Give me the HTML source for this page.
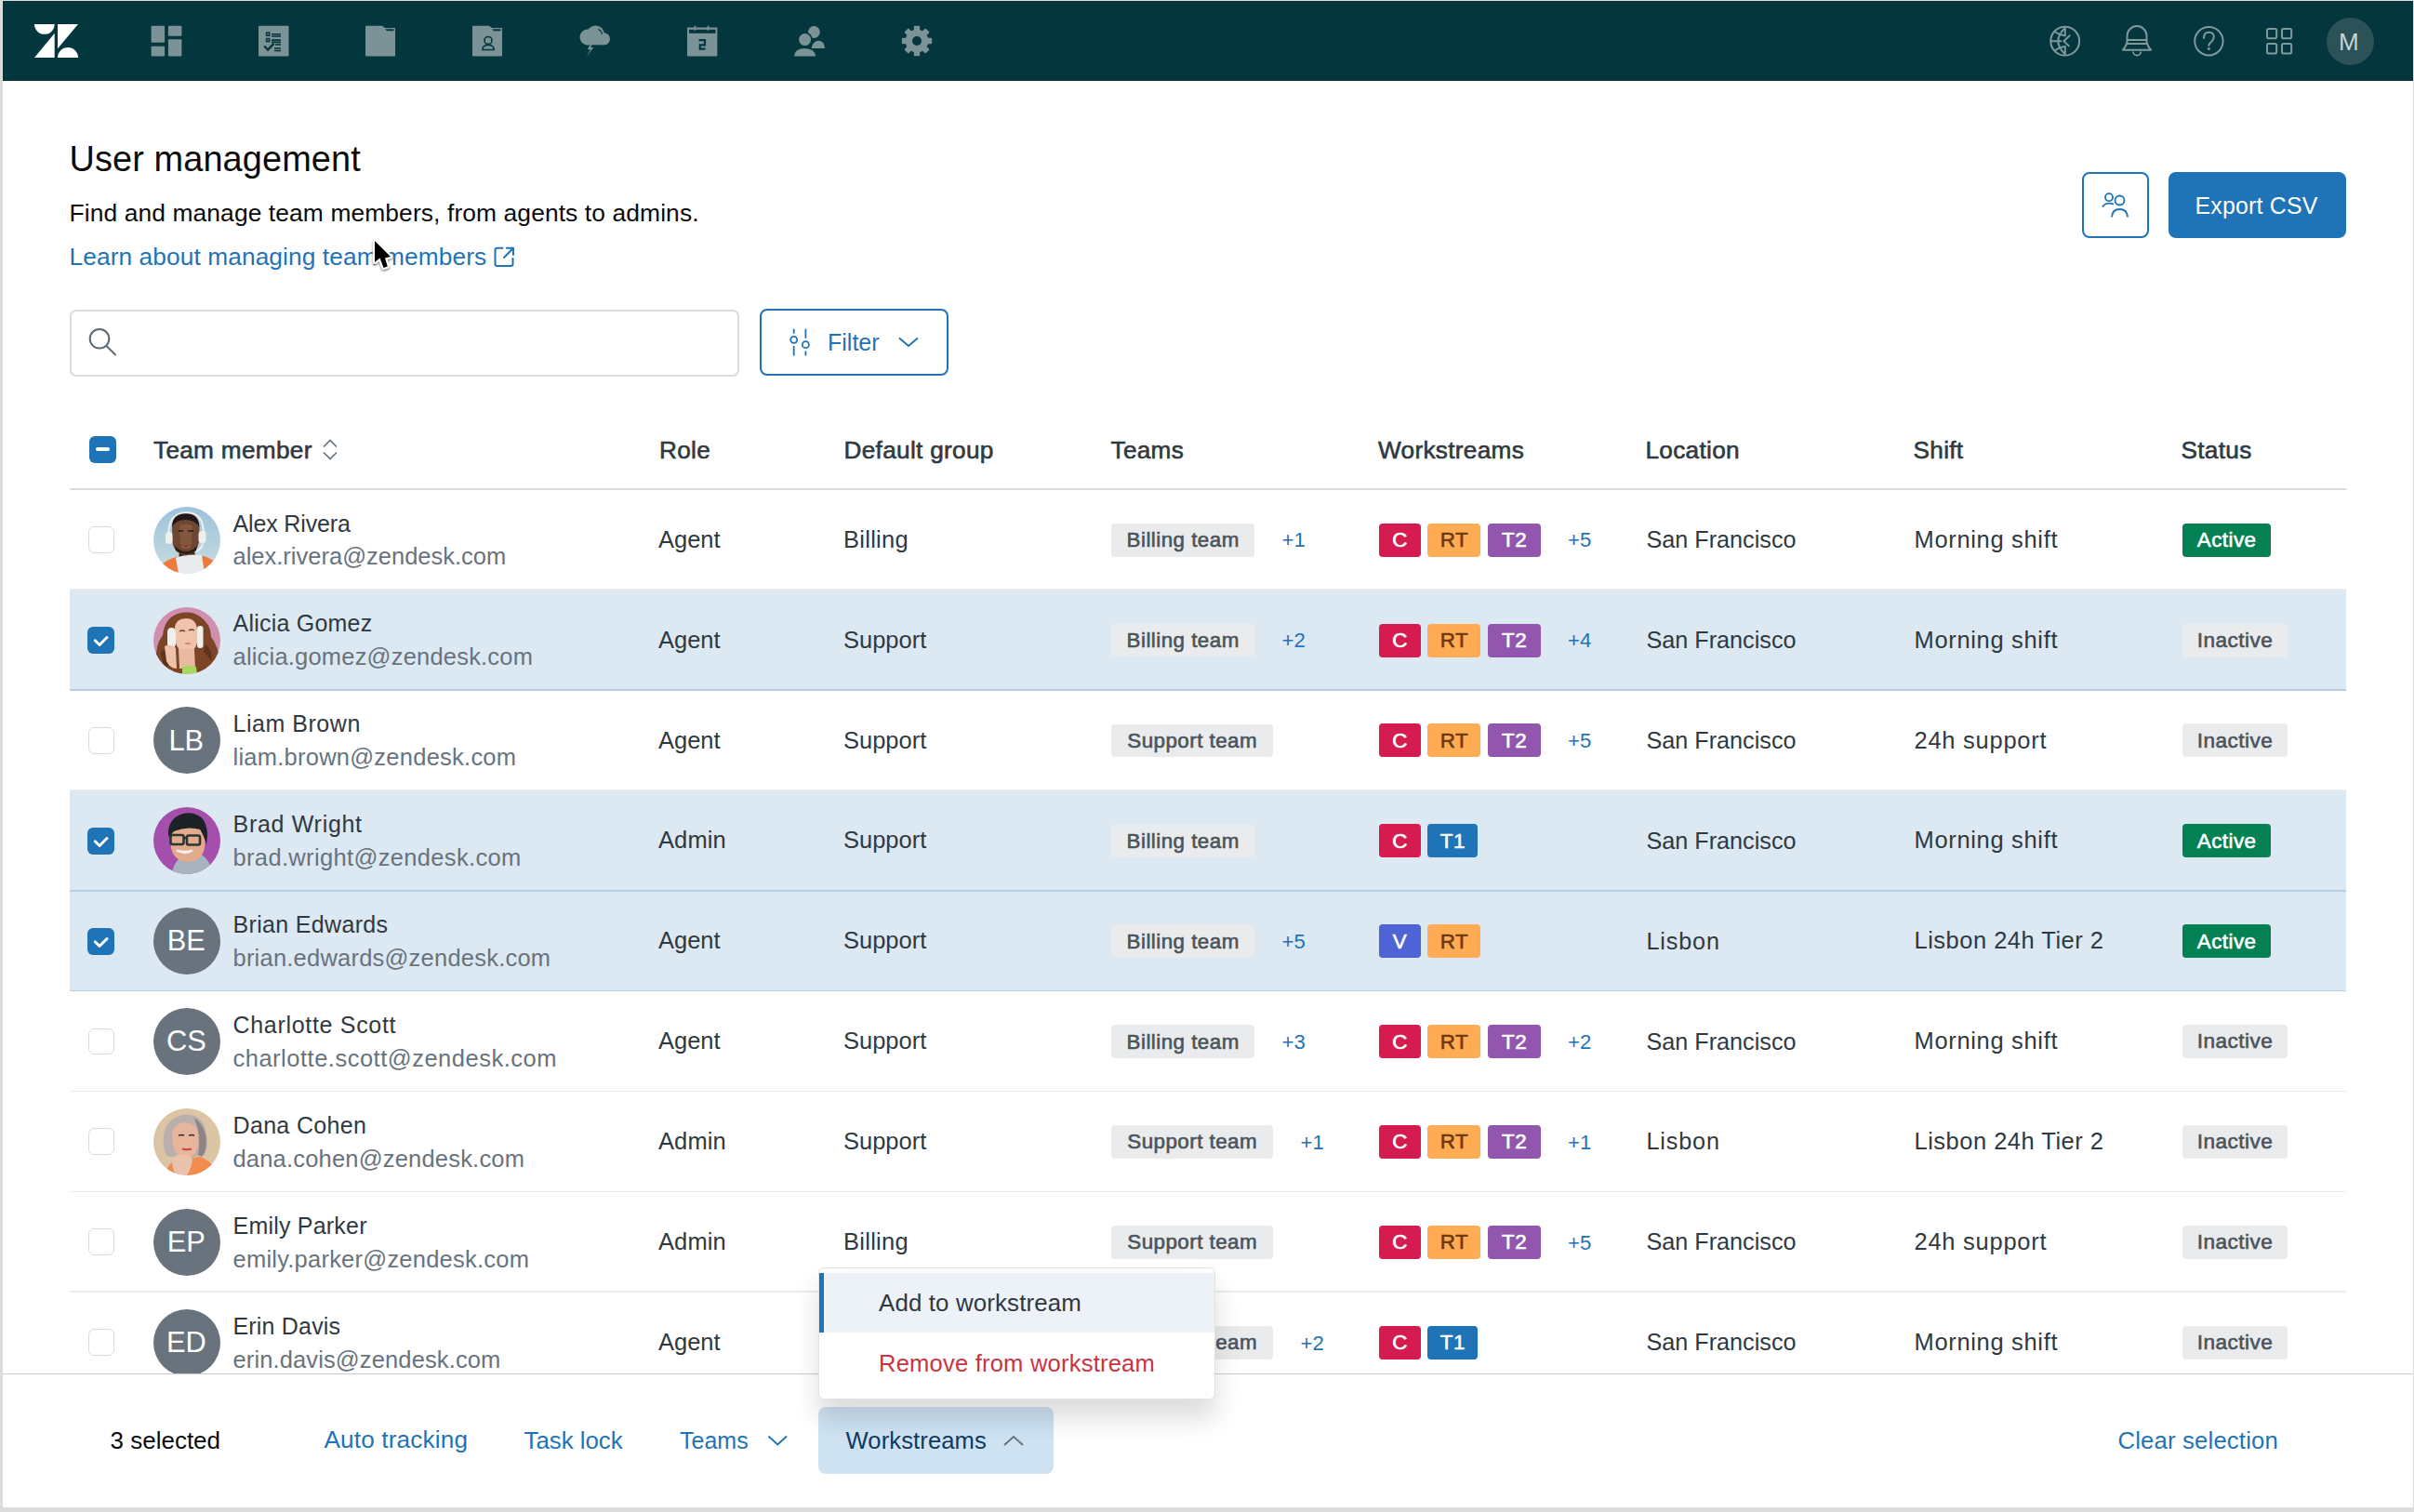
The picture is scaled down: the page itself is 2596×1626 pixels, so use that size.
<!DOCTYPE html><html><head><meta charset="utf-8"><style>
html,body{margin:0;padding:0;}
body{width:2596px;height:1626px;position:relative;overflow:hidden;background:#fff;font-family:"Liberation Sans",sans-serif;}
.t{position:absolute;white-space:nowrap;}
.b{position:absolute;display:block;}
</style></head><body>
<div class="b" style="left:0.00px;top:0.00px;width:2596.00px;height:87.00px;background:#03363d;"></div>
<svg class="b" style="left:36.00px;top:25.00px;" width="50" height="38" viewBox="0 0 50 38"><g fill="#fff">
<path d="M1 1 H22.7 A10.85 10.85 0 0 1 1 1 Z"/>
<path d="M1 37 H22.7 V10.8 Z"/>
<path d="M26 1 H48 L26 27.3 Z"/>
<path d="M26 37 A11 11 0 0 1 48 37 Z"/>
</g></svg>
<svg class="b" style="left:162.00px;top:27.00px;" width="34" height="34" viewBox="0 0 34 34"><g fill="#7b9396">
<rect x="0.6" y="0.7" width="14.5" height="18" rx="1"/>
<rect x="18.9" y="0.7" width="14.5" height="11" rx="1"/>
<rect x="0.6" y="22.7" width="14.5" height="10.8" rx="1"/>
<rect x="18.9" y="15.2" width="14.5" height="18.3" rx="1"/>
</g></svg>
<svg class="b" style="left:277.00px;top:27.00px;" width="34" height="34" viewBox="0 0 34 34"><rect x="1" y="0.7" width="32.5" height="32.8" rx="1.2" fill="#7b9396"/>
<g fill="none" stroke="#03363d" stroke-width="1.6">
<rect x="9.6" y="8.2" width="3" height="3"/><rect x="9.6" y="14.6" width="3" height="3"/>
<path d="M15 9.7 H25 M15 12 H25 M15 16.1 H25 M15 18.4 H25 M19 21 H25 M18 25 H25 M18 27.5 H25"/>
</g>
<path d="M7.2 22.5 L11 26.5 L17.5 19.8" fill="none" stroke="#03363d" stroke-width="2.4"/></svg>
<svg class="b" style="left:392.00px;top:27.00px;" width="34" height="34" viewBox="0 0 34 34"><path d="M1 1.7 Q1 0.7 2 0.7 H19 L22 3 H33 V33 Q33 33.5 32 33.5 H2 Q1 33.5 1 32.5 Z" fill="#7b9396"/>
<path d="M22 4.3 H31.5 V6.2 H24 Z" fill="#03363d"/></svg>
<svg class="b" style="left:507.00px;top:27.00px;" width="34" height="34" viewBox="0 0 34 34"><path d="M1 1.7 Q1 0.7 2 0.7 H19 L22 3 H33 V33 Q33 33.5 32 33.5 H2 Q1 33.5 1 32.5 Z" fill="#7b9396"/>
<path d="M22 4.3 H31.5 V6.2 H24 Z" fill="#03363d"/>
<circle cx="18" cy="16.5" r="4" fill="none" stroke="#03363d" stroke-width="1.6"/>
<path d="M11.8 26.5 Q11.8 21.5 18 21.5 Q24.2 21.5 24.2 26.5 Z" fill="none" stroke="#03363d" stroke-width="1.6"/></svg>
<svg class="b" style="left:622.00px;top:27.00px;" width="36" height="36" viewBox="0 0 36 36"><g fill="#7b9396">
<circle cx="10" cy="13" r="8.5"/><circle cx="18.5" cy="10" r="9.5"/><circle cx="27.5" cy="14.8" r="6.5"/>
<rect x="8" y="12" width="20" height="9.3"/>
<path d="M14.2 18 L9.8 26.2 L13 26.2 L8.8 34 L16.2 24 L13 24 L16 18 Z"/>
</g>
<path d="M21 4.5 Q25 5.5 25.3 10" fill="none" stroke="#03363d" stroke-width="1.2"/></svg>
<svg class="b" style="left:738.00px;top:27.00px;" width="35" height="35" viewBox="0 0 35 35"><path d="M1 2.5 H33.4 V32.5 Q33.4 33.5 32.4 33.5 H2 Q1 33.5 1 32.5 Z" fill="#7b9396"/>
<rect x="3" y="4.8" width="28.5" height="4" fill="#03363d"/>
<rect x="8.5" y="0.7" width="1.8" height="5" fill="#7b9396"/><rect x="22.7" y="0.7" width="1.8" height="5" fill="#7b9396"/>
<path d="M13.5 16.2 H20 V21.3 H14.8 V25.6 H20.5" fill="none" stroke="#03363d" stroke-width="2.2"/></svg>
<svg class="b" style="left:853.00px;top:27.00px;" width="36" height="36" viewBox="0 0 36 36"><g fill="#7b9396">
<circle cx="22.4" cy="7.5" r="6.4"/>
<path d="M19.5 24.9 Q21 17 27.5 16.8 Q33.5 17.2 34.2 24.9 Z"/>
<circle cx="12.6" cy="15.6" r="7.3" stroke="#03363d" stroke-width="1.6"/>
<path d="M1 33.6 Q1.5 25 12.3 24.9 Q23.5 25.2 24.2 33.6 Z"/>
</g></svg>
<svg class="b" style="left:969.00px;top:27.00px;" width="34" height="34" viewBox="0 0 34 34"><g transform="translate(17,17)" fill="#7b9396"><rect x="-3.2" y="-16.2" width="6.4" height="7" rx="1" transform="rotate(0)"/><rect x="-3.2" y="-16.2" width="6.4" height="7" rx="1" transform="rotate(45)"/><rect x="-3.2" y="-16.2" width="6.4" height="7" rx="1" transform="rotate(90)"/><rect x="-3.2" y="-16.2" width="6.4" height="7" rx="1" transform="rotate(135)"/><rect x="-3.2" y="-16.2" width="6.4" height="7" rx="1" transform="rotate(180)"/><rect x="-3.2" y="-16.2" width="6.4" height="7" rx="1" transform="rotate(225)"/><rect x="-3.2" y="-16.2" width="6.4" height="7" rx="1" transform="rotate(270)"/><rect x="-3.2" y="-16.2" width="6.4" height="7" rx="1" transform="rotate(315)"/><circle r="12.3"/><circle r="5" fill="#03363d"/></g></svg>
<svg class="b" style="left:2203.00px;top:27.00px;" width="36" height="36" viewBox="0 0 36 36"><g fill="none" stroke="#80999c" stroke-width="2" stroke-linecap="round">
<circle cx="17.7" cy="17.2" r="15.4"/>
<path d="M17.8 3.5 V11.3 M17.8 23 V30.8"/>
<path d="M17.3 3.5 Q3.3 17.2 17.3 30.8"/>
<path d="M3.5 17.2 H13.3"/>
<path d="M7.2 7.5 Q11.5 10.6 17.3 11.3 M7.2 27 Q11.5 23.8 17.3 23.1"/>
<path d="M22.7 11.3 L16.4 17.2 L21.8 22.4"/>
</g></svg>
<svg class="b" style="left:2281.00px;top:26.00px;" width="36" height="40" viewBox="0 0 36 40"><g fill="none" stroke="#80999c" stroke-width="2" stroke-linejoin="round">
<path d="M6.5 19 V12.6 A10.5 10.5 0 0 1 27.5 12.6 V19 Q28.5 24 32 27.8 H2 Q5.5 24 6.5 19 Z"/>
<path d="M6.5 16.9 H27.5 M6.5 20.9 H27.5"/>
<path d="M13 29.5 A4.1 4.1 0 0 0 21.2 29.5" stroke-width="1.8"/>
</g></svg>
<svg class="b" style="left:2358.00px;top:27.00px;" width="36" height="36" viewBox="0 0 36 36"><g fill="none" stroke="#80999c" stroke-width="2" stroke-linecap="round">
<circle cx="17.4" cy="17.2" r="15.2"/>
<path d="M12 14 Q12 7.8 17.4 7.8 Q22.8 7.8 22.8 12.8 Q22.8 15.6 19.8 18.2 Q17.3 20.3 17.3 22"/>
</g><circle cx="17.3" cy="25.4" r="1.5" fill="#80999c"/></svg>
<svg class="b" style="left:2436.00px;top:29.00px;" width="33" height="33" viewBox="0 0 33 33"><g fill="none" stroke="#80999c" stroke-width="2">
<rect x="2" y="2" width="10.2" height="10.2" rx="1.8"/><rect x="18" y="2" width="10.2" height="10.2" rx="1.8"/>
<rect x="2" y="18.1" width="10.2" height="10.4" rx="1.8"/><rect x="18" y="18.1" width="10.2" height="10.4" rx="1.8"/>
</g></svg>
<div class="b" style="left:2501.50px;top:19.00px;width:51.00px;height:51.00px;background:#2b5256;border-radius:50%;"></div>
<div class="t" style="left:2515.00px;top:29.24px;font-size:26px;line-height:32.5px;color:#c9d3d4;font-weight:400;">M</div>
<div class="t" style="left:74.50px;top:148.18px;font-size:37.9px;line-height:47.38px;color:#0b0b0b;font-weight:400;letter-spacing:0.110px;">User management</div>
<div class="t" style="left:74.50px;top:212.95px;font-size:26.4px;line-height:33.0px;color:#0b0b0b;font-weight:400;letter-spacing:0.102px;">Find and manage team members, from agents to admins.</div>
<div class="t" style="left:74.50px;top:260.25px;font-size:26.3px;line-height:32.88px;color:#1f73b7;font-weight:400;letter-spacing:0.088px;">Learn about managing team members</div>
<svg class="b" style="left:531.00px;top:265.00px;" width="24" height="23" viewBox="0 0 24 23"><g fill="none" stroke="#1f73b7" stroke-width="2" stroke-linecap="round" stroke-linejoin="round">
<path d="M9.5 1.8 H3.8 Q1.5 1.8 1.5 4 V19 Q1.5 21 3.8 21 H18.5 Q20.5 21 20.5 19 V13"/>
<path d="M13.8 1.8 H21 V9 M21 1.8 L11 12"/>
</g></svg>
<div class="b" style="left:2239.00px;top:184.50px;width:71.50px;height:71.50px;box-sizing:border-box;border:2px solid #1f73b7;border-radius:8px;"></div>
<svg class="b" style="left:2260.00px;top:206.00px;" width="32" height="30" viewBox="0 0 32 30"><g fill="none" stroke="#1f73b7" stroke-width="1.8">
<circle cx="8" cy="6.2" r="4"/><circle cx="19.5" cy="9.5" r="5"/>
<path d="M1 16.5 Q3.5 12.6 8.5 12.6 Q11 12.6 12.8 13.8"/>
<path d="M11 27.5 Q11.5 19 19.5 19 Q27.5 19 28 27.5"/>
</g></svg>
<div class="b" style="left:2332.00px;top:184.50px;width:191.00px;height:71.50px;background:#1f73b7;border-radius:8px;"></div>
<div class="t" style="left:2360.50px;top:205.91px;font-size:24.9px;line-height:31.12px;color:#fff;font-weight:400;letter-spacing:0.208px;">Export CSV</div>
<div class="b" style="left:75.00px;top:333.00px;width:719.50px;height:71.50px;box-sizing:border-box;border:2px solid #d8dcde;border-radius:7px;"></div>
<svg class="b" style="left:94.00px;top:351.00px;" width="34" height="34" viewBox="0 0 34 34"><g fill="none" stroke="#5c6970" stroke-width="2">
<circle cx="13" cy="13.3" r="10.3"/><path d="M20.5 21 L30 30.5" stroke-linecap="round"/></g></svg>
<div class="b" style="left:817.00px;top:332.00px;width:203.00px;height:72.00px;box-sizing:border-box;border:2px solid #1f73b7;border-radius:8px;"></div>
<svg class="b" style="left:846.00px;top:350.00px;" width="28" height="36" viewBox="0 0 28 36"><g fill="none" stroke="#1f73b7" stroke-width="1.8">
<path d="M7.7 3.8 V8.8 M7.7 22 V32.6 M20.4 3.8 V13.8 M20.4 27.4 V32.6"/>
<circle cx="7.7" cy="15.3" r="3.5"/><circle cx="20.4" cy="20.7" r="3.5"/></g></svg>
<div class="t" style="left:890.00px;top:352.91px;font-size:25px;line-height:31.25px;color:#1f73b7;font-weight:400;">Filter</div>
<svg class="b" style="left:965.00px;top:361.00px;" width="24" height="14" viewBox="0 0 24 14"><path d="M2 2.5 L12 11 L22 2.5" fill="none" stroke="#1f73b7" stroke-width="1.9"/></svg>
<svg class="b" style="left:393.00px;top:248.00px;" width="36" height="48" viewBox="0 0 36 48"><defs><filter id="cs" x="-30%" y="-30%" width="160%" height="160%"><feGaussianBlur stdDeviation="1.3"/></filter></defs>
<path d="M10 11 L10 34 L15.5 29.5 L19.5 40 L23.8 38.5 L21 29.5 L27 28 Z" fill="rgba(0,0,0,0.45)" stroke="rgba(0,0,0,0.45)" stroke-width="4.5" stroke-linejoin="round" filter="url(#cs)" transform="translate(0,1.5)"/>
<path d="M10 11 L10 34 L15.5 29.5 L19.5 40 L23.8 38.5 L21 29.5 L27 28 Z" fill="#fff" stroke="#fff" stroke-width="4.4" stroke-linejoin="round"/>
<path d="M10 11 L10 34 L15.5 29.5 L19.5 40 L23.8 38.5 L21 29.5 L27 28 Z" fill="#000"/>
</svg>
<div class="b" style="left:96.20px;top:469.00px;width:28.60px;height:28.90px;background:#1f73b7;border-radius:6px;"></div>
<div class="b" style="left:103.00px;top:481.30px;width:15.00px;height:4.20px;background:#fff;border-radius:3px;"></div>
<div class="t" style="left:165.00px;top:467.75px;font-size:26.2px;line-height:32.75px;color:#2f3941;font-weight:400;-webkit-text-stroke:0.6px currentColor;letter-spacing:0.3px;">Team member</div>
<svg class="b" style="left:345.00px;top:471.00px;" width="20" height="25" viewBox="0 0 20 25"><g fill="none" stroke="#68737d" stroke-width="1.7"><path d="M3 9.5 L10 2.5 L17 9.5"/><path d="M3 15.5 L10 22.5 L17 15.5"/></g></svg>
<div class="t" style="left:709.00px;top:467.75px;font-size:26.2px;line-height:32.75px;color:#2f3941;font-weight:400;-webkit-text-stroke:0.6px currentColor;letter-spacing:0.3px;">Role</div>
<div class="t" style="left:907.50px;top:467.75px;font-size:26.2px;line-height:32.75px;color:#2f3941;font-weight:400;-webkit-text-stroke:0.6px currentColor;letter-spacing:0.3px;">Default group</div>
<div class="t" style="left:1194.50px;top:467.75px;font-size:26.2px;line-height:32.75px;color:#2f3941;font-weight:400;-webkit-text-stroke:0.6px currentColor;letter-spacing:0.3px;">Teams</div>
<div class="t" style="left:1482.00px;top:467.75px;font-size:26.2px;line-height:32.75px;color:#2f3941;font-weight:400;-webkit-text-stroke:0.6px currentColor;letter-spacing:0.3px;">Workstreams</div>
<div class="t" style="left:1769.50px;top:467.75px;font-size:26.2px;line-height:32.75px;color:#2f3941;font-weight:400;-webkit-text-stroke:0.6px currentColor;letter-spacing:0.3px;">Location</div>
<div class="t" style="left:2057.50px;top:467.75px;font-size:26.2px;line-height:32.75px;color:#2f3941;font-weight:400;-webkit-text-stroke:0.6px currentColor;letter-spacing:0.3px;">Shift</div>
<div class="t" style="left:2345.50px;top:467.75px;font-size:26.2px;line-height:32.75px;color:#2f3941;font-weight:400;-webkit-text-stroke:0.6px currentColor;letter-spacing:0.3px;">Status</div>
<div class="b" style="left:74.50px;top:525.00px;width:2448.50px;height:2.00px;background:#d8dcde;"></div>
<div class="b" style="left:74.50px;top:633.10px;width:2448.50px;height:1.80px;background:#e9ebed;"></div>
<div class="b" style="left:94.60px;top:566.00px;width:28.60px;height:28.80px;box-sizing:border-box;border:1.6px solid #d8dcde;border-radius:6px;background:#fff;"></div>
<svg class="b" style="left:165.00px;top:544.60px;" width="72" height="72" viewBox="0 0 72 72"><clipPath id="c0"><circle cx="36" cy="36" r="36"/></clipPath><g clip-path="url(#c0)"><filter id="blp1" x="-10%" y="-10%" width="120%" height="120%"><feGaussianBlur stdDeviation="0.7"/></filter><defs><linearGradient id="g1" x1="0" y1="0" x2="0" y2="1"><stop offset="0" stop-color="#9cc3da"/><stop offset="1" stop-color="#c9dce3"/></linearGradient></defs>
<rect width="72" height="72" fill="url(#g1)"/>
<g filter="url(#blp1)">
<path d="M4 72 L10 61 Q18 55 26 54 L30 72 Z" fill="#ee7a3c"/>
<path d="M50 52 Q60 54 67 60 L62 72 L50 72 Z" fill="#ee7a3c"/>
<path d="M28 48 L44 48 L46 56 L27 56 Z" fill="#3b2619"/>
<path d="M24 55 Q35 50 52 52 L55 72 L27 72 Z" fill="#e8ecec"/>
<path d="M20 24 Q20 8 34.5 8 Q49 8 49.5 24 L49 38 Q47 50 35 52.5 Q22 50 20.5 38 Z" fill="#6e4631"/>
<path d="M28 20 Q34 17 42 20 L41 40 Q35 43 29 40 Z" fill="#84563c"/>
<path d="M20 22 Q20 7 34.5 7 Q49 7 49.5 22 Q45 14 34.5 14 Q24 14 20 22 Z" fill="#231914"/>
<path d="M23 42 Q35 54 47 42 L46 47 Q35 55 24 47 Z" fill="#2e1f17"/>
<path d="M27 26 H32 M37 26 H43" stroke="#2a1a12" stroke-width="1.6"/>
<path d="M30 42.5 Q35 45 40 42.5" stroke="#9a5a48" stroke-width="2"/>
<path d="M16.5 32 Q15 7 35 6 Q55 6 54 32" fill="none" stroke="#ecebea" stroke-width="2.2"/>
<rect x="13" y="27" width="7.5" height="13" rx="3.5" fill="#efefee"/>
<rect x="48.5" y="26" width="8" height="13" rx="3.5" fill="#efefee"/>
<path d="M53 38 Q53 45 46 48" fill="none" stroke="#efefee" stroke-width="1.8"/>
</g></g></svg>
<div class="t" style="left:250.50px;top:547.51px;font-size:25px;line-height:31.25px;color:#2f3941;font-weight:400;letter-spacing:-0.142px;">Alex Rivera</div>
<div class="t" style="left:250.50px;top:583.42px;font-size:25.5px;line-height:31.88px;color:#68737d;font-weight:400;">alex.rivera@zendesk.com</div>
<div class="t" style="left:708.00px;top:564.72px;font-size:25.5px;line-height:31.88px;color:#2f3941;font-weight:400;">Agent</div>
<div class="t" style="left:907.00px;top:564.72px;font-size:25.5px;line-height:31.88px;color:#2f3941;font-weight:400;letter-spacing:0.275px;">Billing</div>
<div class="b" style="left:1195.00px;top:562.80px;width:154.00px;height:35.80px;background:#e9ebed;border-radius:4px;"></div>
<div class="t" style="left:1272.20px;top:567.04px;font-size:22.4px;line-height:28.0px;color:#49545c;font-weight:400;transform:translateX(-50%);-webkit-text-stroke:0.6px currentColor;letter-spacing:0.45px;">Billing team</div>
<div class="t" style="left:1378.50px;top:567.33px;font-size:22.2px;line-height:27.75px;color:#1f73b7;font-weight:400;">+1</div>
<div class="b" style="left:1482.80px;top:562.60px;width:45.00px;height:36.00px;background:#d51b50;border-radius:4px;"></div>
<div class="t" style="left:1505.50px;top:567.04px;font-size:22.4px;line-height:28.0px;color:#fff;font-weight:400;transform:translateX(-50%);-webkit-text-stroke:0.6px currentColor;letter-spacing:0.45px;">C</div>
<div class="b" style="left:1535.10px;top:562.60px;width:57.20px;height:36.00px;background:#ffac55;border-radius:4px;"></div>
<div class="t" style="left:1563.90px;top:567.04px;font-size:22.4px;line-height:28.0px;color:#6b3a11;font-weight:400;transform:translateX(-50%);-webkit-text-stroke:0.6px currentColor;letter-spacing:0.45px;">RT</div>
<div class="b" style="left:1599.60px;top:562.60px;width:57.50px;height:36.00px;background:#9356ae;border-radius:4px;"></div>
<div class="t" style="left:1628.55px;top:567.04px;font-size:22.4px;line-height:28.0px;color:#fff;font-weight:400;transform:translateX(-50%);-webkit-text-stroke:0.6px currentColor;letter-spacing:0.45px;">T2</div>
<div class="t" style="left:1686.00px;top:567.33px;font-size:22.2px;line-height:27.75px;color:#1f73b7;font-weight:400;">+5</div>
<div class="t" style="left:1770.50px;top:565.02px;font-size:25.2px;line-height:31.5px;color:#2f3941;font-weight:400;">San Francisco</div>
<div class="t" style="left:2058.50px;top:564.72px;font-size:25.5px;line-height:31.88px;color:#2f3941;font-weight:400;letter-spacing:0.667px;">Morning shift</div>
<div class="b" style="left:2346.90px;top:562.60px;width:95.00px;height:36.00px;background:#038153;border-radius:4px;"></div>
<div class="t" style="left:2394.60px;top:567.04px;font-size:22.4px;line-height:28.0px;color:#fff;font-weight:400;transform:translateX(-50%);-webkit-text-stroke:0.6px currentColor;letter-spacing:0.45px;">Active</div>
<div class="b" style="left:74.50px;top:634.90px;width:2448.50px;height:107.90px;background:#dce8f2;"></div>
<div class="b" style="left:74.50px;top:741.00px;width:2448.50px;height:1.80px;background:#b5d0e6;"></div>
<div class="b" style="left:94.30px;top:673.90px;width:28.90px;height:29.00px;background:#1f73b7;border-radius:6px;"></div>
<svg class="b" style="left:94.30px;top:673.90px;" width="29" height="29" viewBox="0 0 29 29"><path d="M8.3 14.8 L13 19.5 L21 11.5" fill="none" stroke="#fff" stroke-width="3" stroke-linecap="round" stroke-linejoin="round"/></svg>
<svg class="b" style="left:165.00px;top:652.50px;" width="72" height="72" viewBox="0 0 72 72"><clipPath id="c1"><circle cx="36" cy="36" r="36"/></clipPath><g clip-path="url(#c1)"><filter id="blp2" x="-10%" y="-10%" width="120%" height="120%"><feGaussianBlur stdDeviation="0.7"/></filter><rect width="72" height="72" fill="#d08fae"/>
<g filter="url(#blp2)">
<path d="M3 58 Q2 40 10 30 Q12 12 26 7 Q40 3 50 10 Q62 18 62 32 Q70 42 71 58 L66 72 L8 72 Z" fill="#7b4526"/>
<path d="M8 50 Q12 40 16 52 Q20 62 12 66 Z M56 40 Q64 46 62 58 Q58 50 54 48 Z" fill="#5e311b"/>
<path d="M23 22 Q24 12 35 12 Q46 12 47 24 L47 38 Q45 48 36 49 Q26 48 24 38 Z" fill="#efc3ac"/>
<path d="M27 45 L44 45 L45 66 L28 66 Z" fill="#eab9a2"/>
<path d="M31 64 Q38 62 46 64 L47 72 L31 72 Z" fill="#a8d85e"/>
<path d="M28 26 Q31 24 34 26 M38 25 Q41 23 44 25" stroke="#6a4030" stroke-width="1.3" fill="none"/>
<path d="M33 39 Q37 37 41 39 Q37 41.5 33 39 Z" fill="#d8847a"/>
<rect x="15" y="22" width="9" height="22" rx="4.5" fill="#f2eeec"/>
<rect x="47" y="20" width="6.5" height="24" rx="3" fill="#f2eeec"/>
<path d="M12 42 Q18 38 24 44 L25 66 Q18 66 14 58 Z" fill="#eec2aa"/>
</g></g></svg>
<div class="t" style="left:250.50px;top:655.41px;font-size:25px;line-height:31.25px;color:#2f3941;font-weight:400;letter-spacing:0.221px;">Alicia Gomez</div>
<div class="t" style="left:250.50px;top:691.32px;font-size:25.5px;line-height:31.88px;color:#68737d;font-weight:400;letter-spacing:0.199px;">alicia.gomez@zendesk.com</div>
<div class="t" style="left:708.00px;top:672.62px;font-size:25.5px;line-height:31.88px;color:#2f3941;font-weight:400;">Agent</div>
<div class="t" style="left:907.00px;top:672.62px;font-size:25.5px;line-height:31.88px;color:#2f3941;font-weight:400;">Support</div>
<div class="b" style="left:1195.00px;top:670.70px;width:154.00px;height:35.80px;background:#e9ebed;border-radius:4px;"></div>
<div class="t" style="left:1272.20px;top:674.94px;font-size:22.4px;line-height:28.0px;color:#49545c;font-weight:400;transform:translateX(-50%);-webkit-text-stroke:0.6px currentColor;letter-spacing:0.45px;">Billing team</div>
<div class="t" style="left:1378.50px;top:675.23px;font-size:22.2px;line-height:27.75px;color:#1f73b7;font-weight:400;">+2</div>
<div class="b" style="left:1482.80px;top:670.50px;width:45.00px;height:36.00px;background:#d51b50;border-radius:4px;"></div>
<div class="t" style="left:1505.50px;top:674.94px;font-size:22.4px;line-height:28.0px;color:#fff;font-weight:400;transform:translateX(-50%);-webkit-text-stroke:0.6px currentColor;letter-spacing:0.45px;">C</div>
<div class="b" style="left:1535.10px;top:670.50px;width:57.20px;height:36.00px;background:#ffac55;border-radius:4px;"></div>
<div class="t" style="left:1563.90px;top:674.94px;font-size:22.4px;line-height:28.0px;color:#6b3a11;font-weight:400;transform:translateX(-50%);-webkit-text-stroke:0.6px currentColor;letter-spacing:0.45px;">RT</div>
<div class="b" style="left:1599.60px;top:670.50px;width:57.50px;height:36.00px;background:#9356ae;border-radius:4px;"></div>
<div class="t" style="left:1628.55px;top:674.94px;font-size:22.4px;line-height:28.0px;color:#fff;font-weight:400;transform:translateX(-50%);-webkit-text-stroke:0.6px currentColor;letter-spacing:0.45px;">T2</div>
<div class="t" style="left:1686.00px;top:675.23px;font-size:22.2px;line-height:27.75px;color:#1f73b7;font-weight:400;">+4</div>
<div class="t" style="left:1770.50px;top:672.92px;font-size:25.2px;line-height:31.5px;color:#2f3941;font-weight:400;">San Francisco</div>
<div class="t" style="left:2058.50px;top:672.62px;font-size:25.5px;line-height:31.88px;color:#2f3941;font-weight:400;letter-spacing:0.667px;">Morning shift</div>
<div class="b" style="left:2346.90px;top:670.50px;width:113.00px;height:36.00px;background:#e9ebed;border-radius:4px;"></div>
<div class="t" style="left:2403.60px;top:674.74px;font-size:22.6px;line-height:28.25px;color:#49545c;font-weight:400;transform:translateX(-50%);-webkit-text-stroke:0.6px currentColor;letter-spacing:0.45px;">Inactive</div>
<div class="b" style="left:74.50px;top:848.90px;width:2448.50px;height:1.80px;background:#e9ebed;"></div>
<div class="b" style="left:94.60px;top:781.80px;width:28.60px;height:28.80px;box-sizing:border-box;border:1.6px solid #d8dcde;border-radius:6px;background:#fff;"></div>
<div class="b" style="left:164.50px;top:760.10px;width:72.00px;height:72.00px;background:#68737d;border-radius:50%;"></div>
<div class="t" style="left:200.30px;top:777.68px;font-size:30.8px;line-height:38.5px;color:#fff;font-weight:400;transform:translateX(-50%);">LB</div>
<div class="t" style="left:250.50px;top:763.31px;font-size:25px;line-height:31.25px;color:#2f3941;font-weight:400;letter-spacing:0.534px;">Liam Brown</div>
<div class="t" style="left:250.50px;top:799.22px;font-size:25.5px;line-height:31.88px;color:#68737d;font-weight:400;letter-spacing:0.244px;">liam.brown@zendesk.com</div>
<div class="t" style="left:708.00px;top:780.52px;font-size:25.5px;line-height:31.88px;color:#2f3941;font-weight:400;">Agent</div>
<div class="t" style="left:907.00px;top:780.52px;font-size:25.5px;line-height:31.88px;color:#2f3941;font-weight:400;">Support</div>
<div class="b" style="left:1195.00px;top:778.60px;width:174.00px;height:35.80px;background:#e9ebed;border-radius:4px;"></div>
<div class="t" style="left:1282.20px;top:782.84px;font-size:22.4px;line-height:28.0px;color:#49545c;font-weight:400;transform:translateX(-50%);-webkit-text-stroke:0.6px currentColor;letter-spacing:0.45px;">Support team</div>
<div class="b" style="left:1482.80px;top:778.40px;width:45.00px;height:36.00px;background:#d51b50;border-radius:4px;"></div>
<div class="t" style="left:1505.50px;top:782.84px;font-size:22.4px;line-height:28.0px;color:#fff;font-weight:400;transform:translateX(-50%);-webkit-text-stroke:0.6px currentColor;letter-spacing:0.45px;">C</div>
<div class="b" style="left:1535.10px;top:778.40px;width:57.20px;height:36.00px;background:#ffac55;border-radius:4px;"></div>
<div class="t" style="left:1563.90px;top:782.84px;font-size:22.4px;line-height:28.0px;color:#6b3a11;font-weight:400;transform:translateX(-50%);-webkit-text-stroke:0.6px currentColor;letter-spacing:0.45px;">RT</div>
<div class="b" style="left:1599.60px;top:778.40px;width:57.50px;height:36.00px;background:#9356ae;border-radius:4px;"></div>
<div class="t" style="left:1628.55px;top:782.84px;font-size:22.4px;line-height:28.0px;color:#fff;font-weight:400;transform:translateX(-50%);-webkit-text-stroke:0.6px currentColor;letter-spacing:0.45px;">T2</div>
<div class="t" style="left:1686.00px;top:783.13px;font-size:22.2px;line-height:27.75px;color:#1f73b7;font-weight:400;">+5</div>
<div class="t" style="left:1770.50px;top:780.82px;font-size:25.2px;line-height:31.5px;color:#2f3941;font-weight:400;">San Francisco</div>
<div class="t" style="left:2058.50px;top:780.52px;font-size:25.5px;line-height:31.88px;color:#2f3941;font-weight:400;letter-spacing:0.740px;">24h support</div>
<div class="b" style="left:2346.90px;top:778.40px;width:113.00px;height:36.00px;background:#e9ebed;border-radius:4px;"></div>
<div class="t" style="left:2403.60px;top:782.64px;font-size:22.6px;line-height:28.25px;color:#49545c;font-weight:400;transform:translateX(-50%);-webkit-text-stroke:0.6px currentColor;letter-spacing:0.45px;">Inactive</div>
<div class="b" style="left:74.50px;top:850.70px;width:2448.50px;height:107.90px;background:#dce8f2;"></div>
<div class="b" style="left:74.50px;top:956.80px;width:2448.50px;height:1.80px;background:#b5d0e6;"></div>
<div class="b" style="left:94.30px;top:889.70px;width:28.90px;height:29.00px;background:#1f73b7;border-radius:6px;"></div>
<svg class="b" style="left:94.30px;top:889.70px;" width="29" height="29" viewBox="0 0 29 29"><path d="M8.3 14.8 L13 19.5 L21 11.5" fill="none" stroke="#fff" stroke-width="3" stroke-linecap="round" stroke-linejoin="round"/></svg>
<svg class="b" style="left:165.00px;top:868.30px;" width="72" height="72" viewBox="0 0 72 72"><clipPath id="c3"><circle cx="36" cy="36" r="36"/></clipPath><g clip-path="url(#c3)"><filter id="blp3" x="-10%" y="-10%" width="120%" height="120%"><feGaussianBlur stdDeviation="0.7"/></filter><rect width="72" height="72" fill="#a44fab"/>
<g filter="url(#blp3)">
<path d="M20 72 Q22 56 34 52 L50 50 Q60 56 62 66 L58 72 Z" fill="#a9b2bf"/>
<path d="M18 30 Q16 20 24 16 Q38 10 52 20 Q57 32 55 44 Q52 58 37 59 Q22 58 19 44 Z" fill="#e3aa8c"/>
<path d="M16 30 Q15 12 32 7 Q46 4 54 14 Q60 24 57 40 Q54 30 50 24 Q36 20 22 26 Q18 30 18 34 Z" fill="#1c2326"/>
<g fill="none" stroke="#2b3634" stroke-width="2.6"><rect x="18.5" y="30" width="14" height="10" rx="2"/><rect x="36" y="30.5" width="14" height="10" rx="2"/><path d="M32.5 33 H36"/></g>
<path d="M25 46.5 Q34 52 42 46.5 Q34 49 25 46.5 Z" fill="#fff" stroke="#f4f0ee" stroke-width="2"/>
</g></g></svg>
<div class="t" style="left:250.50px;top:871.21px;font-size:25px;line-height:31.25px;color:#2f3941;font-weight:400;letter-spacing:0.702px;">Brad Wright</div>
<div class="t" style="left:250.50px;top:907.12px;font-size:25.5px;line-height:31.88px;color:#68737d;font-weight:400;letter-spacing:0.344px;">brad.wright@zendesk.com</div>
<div class="t" style="left:708.00px;top:888.42px;font-size:25.5px;line-height:31.88px;color:#2f3941;font-weight:400;letter-spacing:0.101px;">Admin</div>
<div class="t" style="left:907.00px;top:888.42px;font-size:25.5px;line-height:31.88px;color:#2f3941;font-weight:400;">Support</div>
<div class="b" style="left:1195.00px;top:886.50px;width:154.00px;height:35.80px;background:#e9ebed;border-radius:4px;"></div>
<div class="t" style="left:1272.20px;top:890.74px;font-size:22.4px;line-height:28.0px;color:#49545c;font-weight:400;transform:translateX(-50%);-webkit-text-stroke:0.6px currentColor;letter-spacing:0.45px;">Billing team</div>
<div class="b" style="left:1482.80px;top:886.30px;width:45.00px;height:36.00px;background:#d51b50;border-radius:4px;"></div>
<div class="t" style="left:1505.50px;top:890.74px;font-size:22.4px;line-height:28.0px;color:#fff;font-weight:400;transform:translateX(-50%);-webkit-text-stroke:0.6px currentColor;letter-spacing:0.45px;">C</div>
<div class="b" style="left:1535.10px;top:886.30px;width:54.00px;height:36.00px;background:#1f73b7;border-radius:4px;"></div>
<div class="t" style="left:1562.30px;top:890.74px;font-size:22.4px;line-height:28.0px;color:#fff;font-weight:400;transform:translateX(-50%);-webkit-text-stroke:0.6px currentColor;letter-spacing:0.45px;">T1</div>
<div class="t" style="left:1770.50px;top:888.72px;font-size:25.2px;line-height:31.5px;color:#2f3941;font-weight:400;">San Francisco</div>
<div class="t" style="left:2058.50px;top:888.42px;font-size:25.5px;line-height:31.88px;color:#2f3941;font-weight:400;letter-spacing:0.667px;">Morning shift</div>
<div class="b" style="left:2346.90px;top:886.30px;width:95.00px;height:36.00px;background:#038153;border-radius:4px;"></div>
<div class="t" style="left:2394.60px;top:890.74px;font-size:22.4px;line-height:28.0px;color:#fff;font-weight:400;transform:translateX(-50%);-webkit-text-stroke:0.6px currentColor;letter-spacing:0.45px;">Active</div>
<div class="b" style="left:74.50px;top:958.60px;width:2448.50px;height:107.90px;background:#dce8f2;"></div>
<div class="b" style="left:74.50px;top:1064.70px;width:2448.50px;height:1.80px;background:#b5d0e6;"></div>
<div class="b" style="left:94.30px;top:997.60px;width:28.90px;height:29.00px;background:#1f73b7;border-radius:6px;"></div>
<svg class="b" style="left:94.30px;top:997.60px;" width="29" height="29" viewBox="0 0 29 29"><path d="M8.3 14.8 L13 19.5 L21 11.5" fill="none" stroke="#fff" stroke-width="3" stroke-linecap="round" stroke-linejoin="round"/></svg>
<div class="b" style="left:164.50px;top:975.90px;width:72.00px;height:72.00px;background:#68737d;border-radius:50%;"></div>
<div class="t" style="left:200.30px;top:993.48px;font-size:30.8px;line-height:38.5px;color:#fff;font-weight:400;transform:translateX(-50%);">BE</div>
<div class="t" style="left:250.50px;top:979.11px;font-size:25px;line-height:31.25px;color:#2f3941;font-weight:400;letter-spacing:0.336px;">Brian Edwards</div>
<div class="t" style="left:250.50px;top:1015.02px;font-size:25.5px;line-height:31.88px;color:#68737d;font-weight:400;letter-spacing:0.219px;">brian.edwards@zendesk.com</div>
<div class="t" style="left:708.00px;top:996.32px;font-size:25.5px;line-height:31.88px;color:#2f3941;font-weight:400;">Agent</div>
<div class="t" style="left:907.00px;top:996.32px;font-size:25.5px;line-height:31.88px;color:#2f3941;font-weight:400;">Support</div>
<div class="b" style="left:1195.00px;top:994.40px;width:154.00px;height:35.80px;background:#e9ebed;border-radius:4px;"></div>
<div class="t" style="left:1272.20px;top:998.64px;font-size:22.4px;line-height:28.0px;color:#49545c;font-weight:400;transform:translateX(-50%);-webkit-text-stroke:0.6px currentColor;letter-spacing:0.45px;">Billing team</div>
<div class="t" style="left:1378.50px;top:998.93px;font-size:22.2px;line-height:27.75px;color:#1f73b7;font-weight:400;">+5</div>
<div class="b" style="left:1482.80px;top:994.20px;width:45.00px;height:36.00px;background:#4e63d5;border-radius:4px;"></div>
<div class="t" style="left:1505.50px;top:998.64px;font-size:22.4px;line-height:28.0px;color:#fff;font-weight:400;transform:translateX(-50%);-webkit-text-stroke:0.6px currentColor;letter-spacing:0.45px;">V</div>
<div class="b" style="left:1535.10px;top:994.20px;width:57.20px;height:36.00px;background:#ffac55;border-radius:4px;"></div>
<div class="t" style="left:1563.90px;top:998.64px;font-size:22.4px;line-height:28.0px;color:#6b3a11;font-weight:400;transform:translateX(-50%);-webkit-text-stroke:0.6px currentColor;letter-spacing:0.45px;">RT</div>
<div class="t" style="left:1770.50px;top:996.62px;font-size:25.2px;line-height:31.5px;color:#2f3941;font-weight:400;letter-spacing:0.837px;">Lisbon</div>
<div class="t" style="left:2058.50px;top:996.32px;font-size:25.5px;line-height:31.88px;color:#2f3941;font-weight:400;letter-spacing:0.493px;">Lisbon 24h Tier 2</div>
<div class="b" style="left:2346.90px;top:994.20px;width:95.00px;height:36.00px;background:#038153;border-radius:4px;"></div>
<div class="t" style="left:2394.60px;top:998.64px;font-size:22.4px;line-height:28.0px;color:#fff;font-weight:400;transform:translateX(-50%);-webkit-text-stroke:0.6px currentColor;letter-spacing:0.45px;">Active</div>
<div class="b" style="left:74.50px;top:1172.60px;width:2448.50px;height:1.80px;background:#e9ebed;"></div>
<div class="b" style="left:94.60px;top:1105.50px;width:28.60px;height:28.80px;box-sizing:border-box;border:1.6px solid #d8dcde;border-radius:6px;background:#fff;"></div>
<div class="b" style="left:164.50px;top:1083.80px;width:72.00px;height:72.00px;background:#68737d;border-radius:50%;"></div>
<div class="t" style="left:200.30px;top:1101.38px;font-size:30.8px;line-height:38.5px;color:#fff;font-weight:400;transform:translateX(-50%);">CS</div>
<div class="t" style="left:250.50px;top:1087.01px;font-size:25px;line-height:31.25px;color:#2f3941;font-weight:400;letter-spacing:0.692px;">Charlotte Scott</div>
<div class="t" style="left:250.50px;top:1122.92px;font-size:25.5px;line-height:31.88px;color:#68737d;font-weight:400;letter-spacing:0.503px;">charlotte.scott@zendesk.com</div>
<div class="t" style="left:708.00px;top:1104.22px;font-size:25.5px;line-height:31.88px;color:#2f3941;font-weight:400;">Agent</div>
<div class="t" style="left:907.00px;top:1104.22px;font-size:25.5px;line-height:31.88px;color:#2f3941;font-weight:400;">Support</div>
<div class="b" style="left:1195.00px;top:1102.30px;width:154.00px;height:35.80px;background:#e9ebed;border-radius:4px;"></div>
<div class="t" style="left:1272.20px;top:1106.54px;font-size:22.4px;line-height:28.0px;color:#49545c;font-weight:400;transform:translateX(-50%);-webkit-text-stroke:0.6px currentColor;letter-spacing:0.45px;">Billing team</div>
<div class="t" style="left:1378.50px;top:1106.83px;font-size:22.2px;line-height:27.75px;color:#1f73b7;font-weight:400;">+3</div>
<div class="b" style="left:1482.80px;top:1102.10px;width:45.00px;height:36.00px;background:#d51b50;border-radius:4px;"></div>
<div class="t" style="left:1505.50px;top:1106.54px;font-size:22.4px;line-height:28.0px;color:#fff;font-weight:400;transform:translateX(-50%);-webkit-text-stroke:0.6px currentColor;letter-spacing:0.45px;">C</div>
<div class="b" style="left:1535.10px;top:1102.10px;width:57.20px;height:36.00px;background:#ffac55;border-radius:4px;"></div>
<div class="t" style="left:1563.90px;top:1106.54px;font-size:22.4px;line-height:28.0px;color:#6b3a11;font-weight:400;transform:translateX(-50%);-webkit-text-stroke:0.6px currentColor;letter-spacing:0.45px;">RT</div>
<div class="b" style="left:1599.60px;top:1102.10px;width:57.50px;height:36.00px;background:#9356ae;border-radius:4px;"></div>
<div class="t" style="left:1628.55px;top:1106.54px;font-size:22.4px;line-height:28.0px;color:#fff;font-weight:400;transform:translateX(-50%);-webkit-text-stroke:0.6px currentColor;letter-spacing:0.45px;">T2</div>
<div class="t" style="left:1686.00px;top:1106.83px;font-size:22.2px;line-height:27.75px;color:#1f73b7;font-weight:400;">+2</div>
<div class="t" style="left:1770.50px;top:1104.52px;font-size:25.2px;line-height:31.5px;color:#2f3941;font-weight:400;">San Francisco</div>
<div class="t" style="left:2058.50px;top:1104.22px;font-size:25.5px;line-height:31.88px;color:#2f3941;font-weight:400;letter-spacing:0.667px;">Morning shift</div>
<div class="b" style="left:2346.90px;top:1102.10px;width:113.00px;height:36.00px;background:#e9ebed;border-radius:4px;"></div>
<div class="t" style="left:2403.60px;top:1106.34px;font-size:22.6px;line-height:28.25px;color:#49545c;font-weight:400;transform:translateX(-50%);-webkit-text-stroke:0.6px currentColor;letter-spacing:0.45px;">Inactive</div>
<div class="b" style="left:74.50px;top:1280.50px;width:2448.50px;height:1.80px;background:#e9ebed;"></div>
<div class="b" style="left:94.60px;top:1213.40px;width:28.60px;height:28.80px;box-sizing:border-box;border:1.6px solid #d8dcde;border-radius:6px;background:#fff;"></div>
<svg class="b" style="left:165.00px;top:1192.00px;" width="72" height="72" viewBox="0 0 72 72"><clipPath id="c6"><circle cx="36" cy="36" r="36"/></clipPath><g clip-path="url(#c6)"><filter id="blp4" x="-10%" y="-10%" width="120%" height="120%"><feGaussianBlur stdDeviation="0.7"/></filter><rect width="72" height="72" fill="#dbc5a5"/>
<g filter="url(#blp4)">
<path d="M12 72 Q16 56 30 54 L50 52 Q62 56 66 66 L62 72 Z" fill="#f28b4d"/>
<path d="M11 40 Q8 14 30 7 Q50 4 56 22 Q60 40 55 50 L42 52 L16 52 Q11 48 11 40 Z" fill="#b9b0ae"/>
<path d="M44 10 Q56 18 57 36 Q56 48 52 52 L48 50 Q52 30 44 10 Z" fill="#8d8483"/>
<path d="M20 26 Q22 16 34 15 Q46 16 48 26 L48 40 Q46 52 35 53 Q23 52 21 40 Z" fill="#e6b59c"/>
<path d="M27 29 Q30 28 33 29 M38 29 Q41 28 44 29" stroke="#3a2a26" stroke-width="1.6" fill="none"/>
<path d="M31 43.5 Q36 45 41 43.5" stroke="#c84432" stroke-width="2.2" fill="none"/>
<path d="M20 56 Q24 48 34 50 Q42 51 42 56 Q40 66 36 72 L24 72 Q20 64 20 56 Z" fill="#e8c2ab"/>
</g></g></svg>
<div class="t" style="left:250.50px;top:1194.91px;font-size:25px;line-height:31.25px;color:#2f3941;font-weight:400;letter-spacing:0.336px;">Dana Cohen</div>
<div class="t" style="left:250.50px;top:1230.82px;font-size:25.5px;line-height:31.88px;color:#68737d;font-weight:400;letter-spacing:0.192px;">dana.cohen@zendesk.com</div>
<div class="t" style="left:708.00px;top:1212.12px;font-size:25.5px;line-height:31.88px;color:#2f3941;font-weight:400;letter-spacing:0.101px;">Admin</div>
<div class="t" style="left:907.00px;top:1212.12px;font-size:25.5px;line-height:31.88px;color:#2f3941;font-weight:400;">Support</div>
<div class="b" style="left:1195.00px;top:1210.20px;width:174.00px;height:35.80px;background:#e9ebed;border-radius:4px;"></div>
<div class="t" style="left:1282.20px;top:1214.44px;font-size:22.4px;line-height:28.0px;color:#49545c;font-weight:400;transform:translateX(-50%);-webkit-text-stroke:0.6px currentColor;letter-spacing:0.45px;">Support team</div>
<div class="t" style="left:1398.50px;top:1214.73px;font-size:22.2px;line-height:27.75px;color:#1f73b7;font-weight:400;">+1</div>
<div class="b" style="left:1482.80px;top:1210.00px;width:45.00px;height:36.00px;background:#d51b50;border-radius:4px;"></div>
<div class="t" style="left:1505.50px;top:1214.44px;font-size:22.4px;line-height:28.0px;color:#fff;font-weight:400;transform:translateX(-50%);-webkit-text-stroke:0.6px currentColor;letter-spacing:0.45px;">C</div>
<div class="b" style="left:1535.10px;top:1210.00px;width:57.20px;height:36.00px;background:#ffac55;border-radius:4px;"></div>
<div class="t" style="left:1563.90px;top:1214.44px;font-size:22.4px;line-height:28.0px;color:#6b3a11;font-weight:400;transform:translateX(-50%);-webkit-text-stroke:0.6px currentColor;letter-spacing:0.45px;">RT</div>
<div class="b" style="left:1599.60px;top:1210.00px;width:57.50px;height:36.00px;background:#9356ae;border-radius:4px;"></div>
<div class="t" style="left:1628.55px;top:1214.44px;font-size:22.4px;line-height:28.0px;color:#fff;font-weight:400;transform:translateX(-50%);-webkit-text-stroke:0.6px currentColor;letter-spacing:0.45px;">T2</div>
<div class="t" style="left:1686.00px;top:1214.73px;font-size:22.2px;line-height:27.75px;color:#1f73b7;font-weight:400;">+1</div>
<div class="t" style="left:1770.50px;top:1212.42px;font-size:25.2px;line-height:31.5px;color:#2f3941;font-weight:400;letter-spacing:0.837px;">Lisbon</div>
<div class="t" style="left:2058.50px;top:1212.12px;font-size:25.5px;line-height:31.88px;color:#2f3941;font-weight:400;letter-spacing:0.493px;">Lisbon 24h Tier 2</div>
<div class="b" style="left:2346.90px;top:1210.00px;width:113.00px;height:36.00px;background:#e9ebed;border-radius:4px;"></div>
<div class="t" style="left:2403.60px;top:1214.24px;font-size:22.6px;line-height:28.25px;color:#49545c;font-weight:400;transform:translateX(-50%);-webkit-text-stroke:0.6px currentColor;letter-spacing:0.45px;">Inactive</div>
<div class="b" style="left:74.50px;top:1388.40px;width:2448.50px;height:1.80px;background:#e9ebed;"></div>
<div class="b" style="left:94.60px;top:1321.30px;width:28.60px;height:28.80px;box-sizing:border-box;border:1.6px solid #d8dcde;border-radius:6px;background:#fff;"></div>
<div class="b" style="left:164.50px;top:1299.60px;width:72.00px;height:72.00px;background:#68737d;border-radius:50%;"></div>
<div class="t" style="left:200.30px;top:1317.18px;font-size:30.8px;line-height:38.5px;color:#fff;font-weight:400;transform:translateX(-50%);">EP</div>
<div class="t" style="left:250.50px;top:1302.81px;font-size:25px;line-height:31.25px;color:#2f3941;font-weight:400;letter-spacing:0.213px;">Emily Parker</div>
<div class="t" style="left:250.50px;top:1338.72px;font-size:25.5px;line-height:31.88px;color:#68737d;font-weight:400;letter-spacing:0.232px;">emily.parker@zendesk.com</div>
<div class="t" style="left:708.00px;top:1320.02px;font-size:25.5px;line-height:31.88px;color:#2f3941;font-weight:400;letter-spacing:0.101px;">Admin</div>
<div class="t" style="left:907.00px;top:1320.02px;font-size:25.5px;line-height:31.88px;color:#2f3941;font-weight:400;letter-spacing:0.275px;">Billing</div>
<div class="b" style="left:1195.00px;top:1318.10px;width:174.00px;height:35.80px;background:#e9ebed;border-radius:4px;"></div>
<div class="t" style="left:1282.20px;top:1322.34px;font-size:22.4px;line-height:28.0px;color:#49545c;font-weight:400;transform:translateX(-50%);-webkit-text-stroke:0.6px currentColor;letter-spacing:0.45px;">Support team</div>
<div class="b" style="left:1482.80px;top:1317.90px;width:45.00px;height:36.00px;background:#d51b50;border-radius:4px;"></div>
<div class="t" style="left:1505.50px;top:1322.34px;font-size:22.4px;line-height:28.0px;color:#fff;font-weight:400;transform:translateX(-50%);-webkit-text-stroke:0.6px currentColor;letter-spacing:0.45px;">C</div>
<div class="b" style="left:1535.10px;top:1317.90px;width:57.20px;height:36.00px;background:#ffac55;border-radius:4px;"></div>
<div class="t" style="left:1563.90px;top:1322.34px;font-size:22.4px;line-height:28.0px;color:#6b3a11;font-weight:400;transform:translateX(-50%);-webkit-text-stroke:0.6px currentColor;letter-spacing:0.45px;">RT</div>
<div class="b" style="left:1599.60px;top:1317.90px;width:57.50px;height:36.00px;background:#9356ae;border-radius:4px;"></div>
<div class="t" style="left:1628.55px;top:1322.34px;font-size:22.4px;line-height:28.0px;color:#fff;font-weight:400;transform:translateX(-50%);-webkit-text-stroke:0.6px currentColor;letter-spacing:0.45px;">T2</div>
<div class="t" style="left:1686.00px;top:1322.63px;font-size:22.2px;line-height:27.75px;color:#1f73b7;font-weight:400;">+5</div>
<div class="t" style="left:1770.50px;top:1320.32px;font-size:25.2px;line-height:31.5px;color:#2f3941;font-weight:400;">San Francisco</div>
<div class="t" style="left:2058.50px;top:1320.02px;font-size:25.5px;line-height:31.88px;color:#2f3941;font-weight:400;letter-spacing:0.740px;">24h support</div>
<div class="b" style="left:2346.90px;top:1317.90px;width:113.00px;height:36.00px;background:#e9ebed;border-radius:4px;"></div>
<div class="t" style="left:2403.60px;top:1322.14px;font-size:22.6px;line-height:28.25px;color:#49545c;font-weight:400;transform:translateX(-50%);-webkit-text-stroke:0.6px currentColor;letter-spacing:0.45px;">Inactive</div>
<div class="b" style="left:74.50px;top:1496.30px;width:2448.50px;height:1.80px;background:#e9ebed;"></div>
<div class="b" style="left:94.60px;top:1429.20px;width:28.60px;height:28.80px;box-sizing:border-box;border:1.6px solid #d8dcde;border-radius:6px;background:#fff;"></div>
<div class="b" style="left:164.50px;top:1407.50px;width:72.00px;height:72.00px;background:#68737d;border-radius:50%;"></div>
<div class="t" style="left:200.30px;top:1425.08px;font-size:30.8px;line-height:38.5px;color:#fff;font-weight:400;transform:translateX(-50%);">ED</div>
<div class="t" style="left:250.50px;top:1410.71px;font-size:25px;line-height:31.25px;color:#2f3941;font-weight:400;letter-spacing:0.187px;">Erin Davis</div>
<div class="t" style="left:250.50px;top:1446.62px;font-size:25.5px;line-height:31.88px;color:#68737d;font-weight:400;letter-spacing:0.123px;">erin.davis@zendesk.com</div>
<div class="t" style="left:708.00px;top:1427.92px;font-size:25.5px;line-height:31.88px;color:#2f3941;font-weight:400;">Agent</div>
<div class="b" style="left:1195.00px;top:1426.00px;width:174.00px;height:35.80px;background:#e9ebed;border-radius:4px;"></div>
<div class="t" style="left:1282.20px;top:1430.24px;font-size:22.4px;line-height:28.0px;color:#49545c;font-weight:400;transform:translateX(-50%);-webkit-text-stroke:0.6px currentColor;letter-spacing:0.45px;">Support team</div>
<div class="t" style="left:1398.50px;top:1430.53px;font-size:22.2px;line-height:27.75px;color:#1f73b7;font-weight:400;">+2</div>
<div class="b" style="left:1482.80px;top:1425.80px;width:45.00px;height:36.00px;background:#d51b50;border-radius:4px;"></div>
<div class="t" style="left:1505.50px;top:1430.24px;font-size:22.4px;line-height:28.0px;color:#fff;font-weight:400;transform:translateX(-50%);-webkit-text-stroke:0.6px currentColor;letter-spacing:0.45px;">C</div>
<div class="b" style="left:1535.10px;top:1425.80px;width:54.00px;height:36.00px;background:#1f73b7;border-radius:4px;"></div>
<div class="t" style="left:1562.30px;top:1430.24px;font-size:22.4px;line-height:28.0px;color:#fff;font-weight:400;transform:translateX(-50%);-webkit-text-stroke:0.6px currentColor;letter-spacing:0.45px;">T1</div>
<div class="t" style="left:1770.50px;top:1428.22px;font-size:25.2px;line-height:31.5px;color:#2f3941;font-weight:400;">San Francisco</div>
<div class="t" style="left:2058.50px;top:1427.92px;font-size:25.5px;line-height:31.88px;color:#2f3941;font-weight:400;letter-spacing:0.667px;">Morning shift</div>
<div class="b" style="left:2346.90px;top:1425.80px;width:113.00px;height:36.00px;background:#e9ebed;border-radius:4px;"></div>
<div class="t" style="left:2403.60px;top:1430.04px;font-size:22.6px;line-height:28.25px;color:#49545c;font-weight:400;transform:translateX(-50%);-webkit-text-stroke:0.6px currentColor;letter-spacing:0.45px;">Inactive</div>
<div class="b" style="left:0.00px;top:1477.00px;width:2596.00px;height:149.00px;background:#fff;"></div>
<div class="b" style="left:0.00px;top:1476.50px;width:2596.00px;height:1.80px;background:#c6cdd2;"></div>
<div class="t" style="left:118.50px;top:1532.54px;font-size:26px;line-height:32.5px;color:#0b0b0b;font-weight:400;">3 selected</div>
<div class="t" style="left:348.50px;top:1532.35px;font-size:26.2px;line-height:32.75px;color:#1f73b7;font-weight:400;letter-spacing:0.135px;">Auto tracking</div>
<div class="t" style="left:563.50px;top:1532.74px;font-size:25.8px;line-height:32.25px;color:#1f73b7;font-weight:400;">Task lock</div>
<div class="t" style="left:731.00px;top:1533.51px;font-size:25px;line-height:31.25px;color:#1f73b7;font-weight:400;">Teams</div>
<svg class="b" style="left:824.00px;top:1542.00px;" width="25" height="15" viewBox="0 0 25 15"><path d="M2.5 2.5 L12.3 11.5 L22 2.5" fill="none" stroke="#1f73b7" stroke-width="1.9"/></svg>
<div class="b" style="left:880.00px;top:1513.00px;width:253.00px;height:71.50px;background:#cee2f2;border-radius:8px;"></div>
<div class="b" style="left:879.50px;top:1363.00px;width:427.50px;height:141.60px;background:#fff;border:1px solid #dfe3e6;box-sizing:border-box;border-radius:6px;box-shadow:0 20px 28px rgba(0,0,0,0.14);"></div>
<div class="b" style="left:880.50px;top:1368.80px;width:425.50px;height:64.60px;background:#edf2f9;"></div>
<div class="b" style="left:880.50px;top:1368.80px;width:5.50px;height:64.60px;background:#1f73b7;"></div>
<div class="t" style="left:945.00px;top:1385.14px;font-size:25.9px;line-height:32.38px;color:#2f3941;font-weight:400;letter-spacing:0.127px;">Add to workstream</div>
<div class="t" style="left:945.00px;top:1450.13px;font-size:25.6px;line-height:32.0px;color:#cc3340;font-weight:400;letter-spacing:0.184px;">Remove from workstream</div>
<div class="t" style="left:909.50px;top:1532.93px;font-size:25.6px;line-height:32.0px;color:#0f3a5e;font-weight:400;letter-spacing:0.103px;">Workstreams</div>
<svg class="b" style="left:1077.00px;top:1542.00px;" width="26" height="15" viewBox="0 0 26 15"><path d="M3 12 L13 3 L23 12" fill="none" stroke="#68737d" stroke-width="1.9"/></svg>
<div class="t" style="left:2277.50px;top:1532.83px;font-size:25.7px;line-height:32.12px;color:#1f73b7;font-weight:400;letter-spacing:0.170px;">Clear selection</div>
<div class="b" style="left:0.00px;top:0.00px;width:2596.00px;height:1.00px;background:#dcdcdc;"></div>
<div class="b" style="left:0.00px;top:0.00px;width:3.00px;height:1626.00px;background:#dcdcdc;"></div>
<div class="b" style="left:2595.00px;top:0.00px;width:1.00px;height:1626.00px;background:#dcdcdc;"></div>
<div class="b" style="left:0.00px;top:1621.00px;width:2596.00px;height:5.00px;background:#dcdcdc;"></div>
</body></html>
